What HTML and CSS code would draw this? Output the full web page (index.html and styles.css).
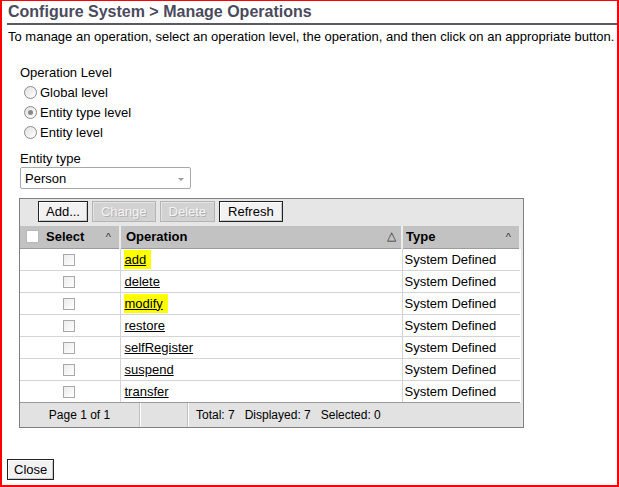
FILE: index.html
```html
<!DOCTYPE html>
<html>
<head>
<meta charset="utf-8">
<link rel="stylesheet" href="styles.css">
</head>
<body>
<div class="page">
  <h1 class="title">Configure System &gt; Manage Operations</h1>
  <p class="intro">To manage an operation, select an operation level, the operation, and then click on an appropriate button.</p>
  <div class="form">
    <div class="label">Operation Level</div>
    <div class="radios">
      <div class="radio"><span class="rb"></span>Global level</div>
      <div class="radio"><span class="rb on"></span>Entity type level</div>
      <div class="radio"><span class="rb"></span>Entity level</div>
    </div>
    <div class="label label2">Entity type</div>
    <div class="select"><span>Person</span><span class="arrow"></span></div>
    <div class="grid">
      <div class="toolbar">
        <button class="btn add">Add...</button>
        <button class="btn dis">Change</button>
        <button class="btn dis">Delete</button>
        <button class="btn">Refresh</button>
      </div>
      <table class="tbl">
        <colgroup>
          <col class="col-sel">
          <col class="col-op">
          <col class="col-type">
        </colgroup>
        <thead>
          <tr>
            <th class="c-sel"><span class="hcb"></span>Select<span class="sort">^</span></th>
            <th class="c-op">Operation<span class="sort tri">&#9651;</span></th>
            <th class="c-type">Type<span class="sort">^</span></th>
          </tr>
        </thead>
        <tbody>
          <tr><td class="c-sel"><span class="cb"></span></td><td class="c-op"><a class="hl">add</a></td><td class="c-type">System Defined</td></tr>
          <tr><td class="c-sel"><span class="cb"></span></td><td class="c-op"><a>delete</a></td><td class="c-type">System Defined</td></tr>
          <tr><td class="c-sel"><span class="cb"></span></td><td class="c-op"><a class="hl">modify</a></td><td class="c-type">System Defined</td></tr>
          <tr><td class="c-sel"><span class="cb"></span></td><td class="c-op"><a>restore</a></td><td class="c-type">System Defined</td></tr>
          <tr><td class="c-sel"><span class="cb"></span></td><td class="c-op"><a>selfRegister</a></td><td class="c-type">System Defined</td></tr>
          <tr><td class="c-sel"><span class="cb"></span></td><td class="c-op"><a>suspend</a></td><td class="c-type">System Defined</td></tr>
          <tr><td class="c-sel"><span class="cb"></span></td><td class="c-op"><a>transfer</a></td><td class="c-type">System Defined</td></tr>
        </tbody>
      </table>
      <div class="footer">
        <div class="f-page">Page 1 of 1</div>
        <div class="f-blank"></div>
        <div class="f-info">Total: 7&nbsp;&nbsp; Displayed: 7&nbsp;&nbsp; Selected: 0</div>
      </div>
    </div>
  </div>
  <div class="actions"><button class="btn close">Close</button></div>
</div>
</body>
</html>
```

FILE: styles.css
```css
html, body {
  margin: 0;
  padding: 0;
  background: #fff;
}
body {
  font-family: "Liberation Sans", Arial, sans-serif;
  font-size: 13px;
  color: #000;
}
.page {
  box-sizing: border-box;
  width: 619px;
  height: 487px;
  border-style: solid;
  border-color: #ff0000;
  border-width: 1px 2px 2px 2px;
  padding: 0 0 0 5px;
  display: flex;
  flex-direction: column;
}
.title {
  margin: 0;
  font-size: 16px;
  font-weight: bold;
  color: #4a4a5c;
  line-height: 20px;
  padding: 1px 0 1px 1px;
  border-bottom: 2px solid #5a5a66;
}
.intro {
  margin: 5px 0 0 1px;
  line-height: 14px;
  white-space: nowrap;
}
.form {
  padding-left: 13px;
  margin-top: 22px;
}
.label {
  line-height: 14px;
}
.label2 {
  margin-top: 10px;
}
.radios {
  display: flex;
  flex-direction: column;
  margin-top: 2px;
}
.radio {
  display: flex;
  align-items: center;
  height: 20px;
  padding-left: 4px;
}
.rb {
  box-sizing: border-box;
  width: 13px;
  height: 13px;
  border-radius: 50%;
  border: 1px solid #8c8c8c;
  background: linear-gradient(135deg, #e2e2e2, #ffffff);
  margin-right: 3px;
  display: inline-flex;
  align-items: center;
  justify-content: center;
}
.rb.on::after {
  content: "";
  width: 5px;
  height: 5px;
  border-radius: 50%;
  background: #8a8a8a;
}
.select {
  box-sizing: border-box;
  margin-top: 1px;
  width: 171px;
  height: 22px;
  border: 1px solid #a8a8a8;
  border-radius: 2px;
  display: flex;
  align-items: center;
  justify-content: space-between;
  padding: 0 6px 0 4px;
}
.arrow {
  width: 0;
  height: 0;
  border-left: 3px solid transparent;
  border-right: 3px solid transparent;
  border-top: 3px solid #9a9a9a;
  margin-top: 2px;
}
.grid {
  box-sizing: border-box;
  margin-top: 9px;
  margin-left: -1px;
  width: 505px;
  border: 1px solid #808080;
  background: #e6e6e6;
  padding-right: 2px;
}
.toolbar {
  display: flex;
  gap: 4px;
  padding: 2px 0 4px 18px;
  height: 21px;
}
.btn {
  box-sizing: border-box;
  height: 21px;
  font-family: "Liberation Sans", Arial, sans-serif;
  font-size: 13px;
  color: #000;
  background: #f2f2f2;
  border: 1px solid #222;
  box-shadow: inset 1px 1px 0 #fff, inset -1px -1px 0 #c8c8c8;
  padding: 0 8px;
  margin: 0;
  border-radius: 0;
}
.btn.add {
  padding: 0 7px;
}
.btn.dis {
  color: #f4f4f4;
  background: #d2d2d2;
  border-color: #b4b4b4;
  box-shadow: inset 1px 1px 0 #e4e4e4;
  text-shadow: 1px 1px 0 #b0b0b0;
}
.tbl {
  border-collapse: collapse;
  table-layout: fixed;
  width: 500px;
  background: #fff;
}
.col-sel { width: 100px; }
.col-op { width: 282px; }
.col-type { width: 118px; }
.tbl th {
  box-sizing: border-box;
  background: #c2c2c2;
  height: 22px;
  padding: 0;
  text-align: left;
  font-weight: bold;
  font-size: 13px;
  position: relative;
  border-right: 2px solid #ececec;
  border-bottom: 1px solid #9c9c9c;
}
.tbl th.c-sel { padding-left: 26px; }
.tbl th.c-op { padding-left: 5px; }
.tbl th.c-type { padding-left: 3px; }
.hcb {
  position: absolute;
  left: 6px;
  top: 4px;
  width: 13px;
  height: 13px;
  background: #fff;
  border: 1px solid #b8b8b8;
  box-sizing: border-box;
}
.sort {
  position: absolute;
  right: 8px;
  top: 5px;
  font-weight: normal;
  font-size: 11px;
  color: #333;
}
.sort.tri {
  top: 3px;
  font-size: 12px;
  right: 5px;
}
.tbl td {
  box-sizing: border-box;
  height: 22px;
  padding: 0;
  border-bottom: 1px solid #d4d4d4;
  border-right: 1px solid #d4d4d4;
  font-size: 13px;
}
.tbl td.c-sel { text-align: center; }
.tbl td.c-op { padding-left: 3px; }
.tbl td.c-type { padding-left: 2px; border-right: none; }
.tbl tbody tr:last-child td { border-bottom: 1px solid #9a9a9a; }
.cb {
  display: inline-block;
  box-sizing: border-box;
  width: 12px;
  height: 12px;
  border: 1px solid #a8a8a8;
  background: linear-gradient(135deg, #ececec, #fff);
  vertical-align: middle;
  margin-right: 2px;
}
.tbl a {
  color: #000;
  text-decoration: underline;
  padding: 2px 5px 2px 1px;
}
.tbl a.hl {
  background: #ffff00;
}
.footer {
  display: flex;
  height: 24px;
  align-items: stretch;
  background: #e2e2e2;
  font-size: 12px;
}
.footer > div {
  display: flex;
  align-items: center;
}
.f-page {
  width: 119px;
  justify-content: center;
  border-right: 1px solid #c0c0c0;
  box-shadow: 1px 0 0 #fff;
}
.f-blank {
  width: 47px;
  border-right: 1px solid #c0c0c0;
  box-shadow: 1px 0 0 #fff;
}
.f-info {
  padding-left: 8px;
  white-space: pre;
}
.actions {
  margin-top: auto;
  margin-bottom: 5px;
}
.btn.close {
  padding: 0 6px;
}
```
